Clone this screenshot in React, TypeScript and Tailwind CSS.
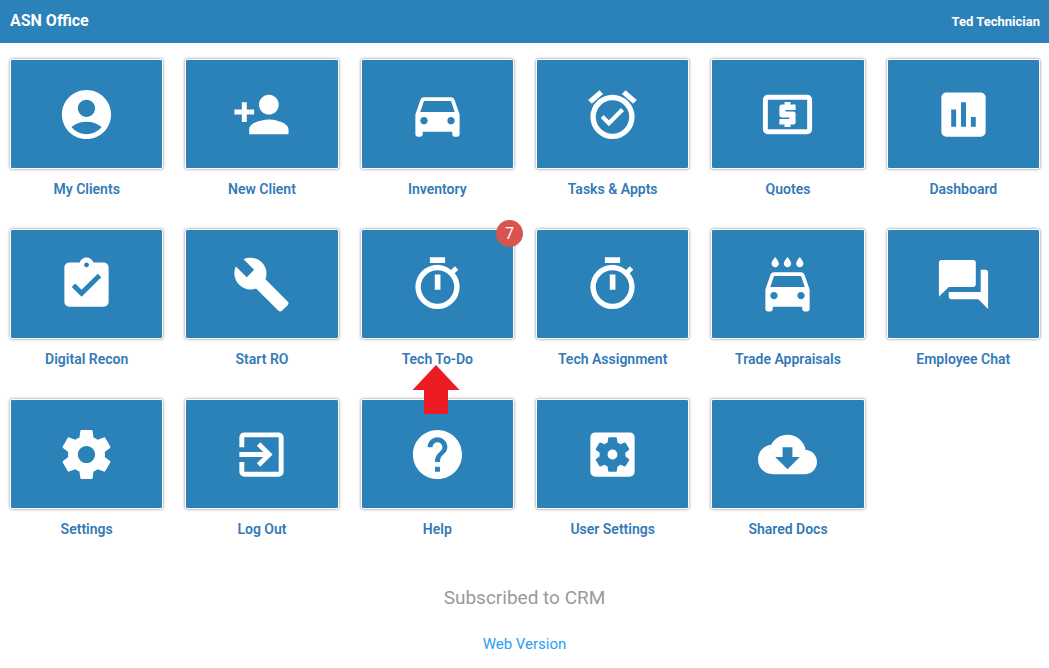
import type { ComponentType, SVGProps } from "react";
import {
  MdAccountCircle,
  MdAssessment,
  MdAssignmentTurnedIn,
  MdBuild,
  MdCloudDownload,
  MdDirectionsCar,
  MdExitToApp,
  MdForum,
  MdHelp,
  MdLocalCarWash,
  MdPersonAdd,
  MdSettingsApplications,
} from "react-icons/md";

interface Tile {
  label: string;
  icon: ComponentType<{ className?: string }>;
  badge?: number;
  highlighted?: boolean;
}

function AlarmCheckIcon(props: SVGProps<SVGSVGElement>) {
  return (
    <svg viewBox="0 0 24 24" fill="currentColor" aria-hidden="true" {...props}>
      <path d="M12 4a9 9 0 1 0 0 18 9 9 0 0 0 0-18zm0 15.800a6.800 6.800 0 1 1 0-13.600 6.800 6.800 0 0 1 0 13.600z" />
      <path d="M10.540 14.300L8.410 12.200 7.200 13.400l3.330 3.400 6.150-6.240-1.230-1.230z" />
      <path d="M2.100 6.100L6.700 2.150 8.150 3.700 3.600 7.600zM21.900 6.100L17.300 2.150 15.850 3.700 20.400 7.600z" />
    </svg>
  );
}

function CashIcon(props: SVGProps<SVGSVGElement>) {
  return (
    <svg viewBox="0 0 24 24" fill="currentColor" aria-hidden="true" {...props}>
      <path d="M20 4H4a2 2 0 0 0-2 2v12a2 2 0 0 0 2 2h16a2 2 0 0 0 2-2V6a2 2 0 0 0-2-2zm0 14H4V6h16z" />
      <path d="M10.800 17.100h2.400v-1h1a1.100 1.100 0 0 0 1.100-1.100v-3.100a1.100 1.100 0 0 0-1.100-1.100h-3v-.6h4.100V7.900h-2.100v-1h-2.400v1h-1A1.100 1.100 0 0 0 8.700 9v3.100a1.100 1.100 0 0 0 1.100 1.100h3v.6H8.700v2.300h2.100z" />
    </svg>
  );
}

function TimerIcon(props: SVGProps<SVGSVGElement>) {
  return (
    <svg viewBox="0 0 24 24" fill="currentColor" aria-hidden="true" {...props}>
      <path d="M8.900.9h6.200v2.400H8.900zM10.900 7.900h2.300v6.200h-2.300z" />
      <path d="M19.030 7.390l1.420-1.420c-.43-.51-.9-.99-1.410-1.410l-1.540 1.540A8.960 8.960 0 0 0 12 4a9 9 0 1 0 9 9c0-2.120-.74-4.070-1.970-5.610zM12 19.800a6.800 6.800 0 1 1 0-13.600 6.800 6.800 0 0 1 0 13.600z" />
    </svg>
  );
}

function GearIcon(props: SVGProps<SVGSVGElement>) {
  return (
    <svg viewBox="0 0 24 24" fill="currentColor" aria-hidden="true" {...props}>
      <path d="M19.43 12.98c.04-.32.07-.64.07-.98s-.03-.66-.07-.98l2.11-1.65c.19-.15.24-.42.12-.64l-2-3.46c-.12-.22-.39-.3-.61-.22l-2.49 1c-.52-.4-1.08-.73-1.69-.98l-.38-2.65A.488.488 0 0 0 14 2h-4c-.25 0-.46.18-.49.42l-.38 2.65c-.61.25-1.17.59-1.69.98l-2.49-1c-.23-.09-.49 0-.61.22l-2 3.46c-.13.22-.07.49.12.64l2.11 1.65c-.04.32-.07.65-.07.98s.03.66.07.98l-2.11 1.65c-.19.15-.24.42-.12.64l2 3.46c.12.22.39.3.61.22l2.49-1c.52.4 1.08.73 1.69.98l.38 2.65c.03.24.24.42.49.42h4c.25 0 .46-.18.49-.42l.38-2.65c.61-.25 1.17-.59 1.69-.98l2.49 1c.23.09.49 0 .61-.22l2-3.46c.12-.22.07-.49-.12-.64l-2.11-1.65zM12 15.500c-1.930 0-3.500-1.570-3.500-3.500s1.570-3.500 3.500-3.500 3.500 1.570 3.500 3.500-1.570 3.500-3.500 3.500z" />
    </svg>
  );
}

const TILES: Tile[] = [
  { label: "My Clients", icon: MdAccountCircle },
  { label: "New Client", icon: MdPersonAdd },
  { label: "Inventory", icon: MdDirectionsCar },
  { label: "Tasks & Appts", icon: AlarmCheckIcon },
  { label: "Quotes", icon: CashIcon },
  { label: "Dashboard", icon: MdAssessment },
  { label: "Digital Recon", icon: MdAssignmentTurnedIn },
  { label: "Start RO", icon: MdBuild },
  { label: "Tech To-Do", icon: TimerIcon, badge: 7, highlighted: true },
  { label: "Tech Assignment", icon: TimerIcon },
  { label: "Trade Appraisals", icon: MdLocalCarWash },
  { label: "Employee Chat", icon: MdForum },
  { label: "Settings", icon: GearIcon },
  { label: "Log Out", icon: MdExitToApp },
  { label: "Help", icon: MdHelp },
  { label: "User Settings", icon: MdSettingsApplications },
  { label: "Shared Docs", icon: MdCloudDownload },
];

function MenuTile({ label, icon: Icon, badge, highlighted }: Tile) {
  return (
    <a href="#" className="relative block text-center">
      <span className="flex h-[110px] items-center justify-center rounded-xs border border-white bg-[#2b82b8] text-white shadow-[0_0_3px_rgba(0,0,0,0.5)]">
        <Icon className="size-[59px]" />
      </span>
      <span className="mt-2 block text-sm leading-6 font-semibold text-[#337ab7]">{label}</span>
      {badge && (
        <span className="absolute -top-[9px] -right-[9px] flex size-[27px] items-center justify-center rounded-full bg-[#d9534f] text-base text-white">
          {badge}
        </span>
      )}
      {highlighted && (
        <svg
          viewBox="0 0 48 49"
          className="absolute top-full left-1/2 z-10 -mt-1.5 h-[49px] w-12 -translate-x-1/2"
          fill="#ed1c24"
          aria-hidden="true"
        >
          <path d="M23 0L46.500 25H35V49H11V25H-.5z" />
        </svg>
      )}
    </a>
  );
}

export default function App() {
  return (
    <div className="bg-white font-[Roboto,sans-serif]">
      <header className="flex h-[43px] items-center justify-between bg-[#2b82b8] pr-[9px] pb-0.5 pl-2.5 text-white">
        <h1 className="text-base font-bold">ASN Office</h1>
        <span className="pt-0.5 text-[13px] font-bold">Ted Technician</span>
      </header>

      <main>
        <nav className="grid grid-cols-6 gap-x-[22px] gap-y-7 pt-4 pr-[9px] pl-2.5">
          {TILES.map((tile) => (
            <MenuTile key={tile.label} {...tile} />
          ))}
        </nav>

        <div className="mt-[43px] text-center">
          <p className="text-[19px] leading-7 text-[#999999]">Subscribed to CRM</p>
          <a href="#" className="mt-5 inline-block text-[15px] leading-6 text-[#2a9df4]">
            Web Version
          </a>
        </div>
      </main>
    </div>
  );
}
